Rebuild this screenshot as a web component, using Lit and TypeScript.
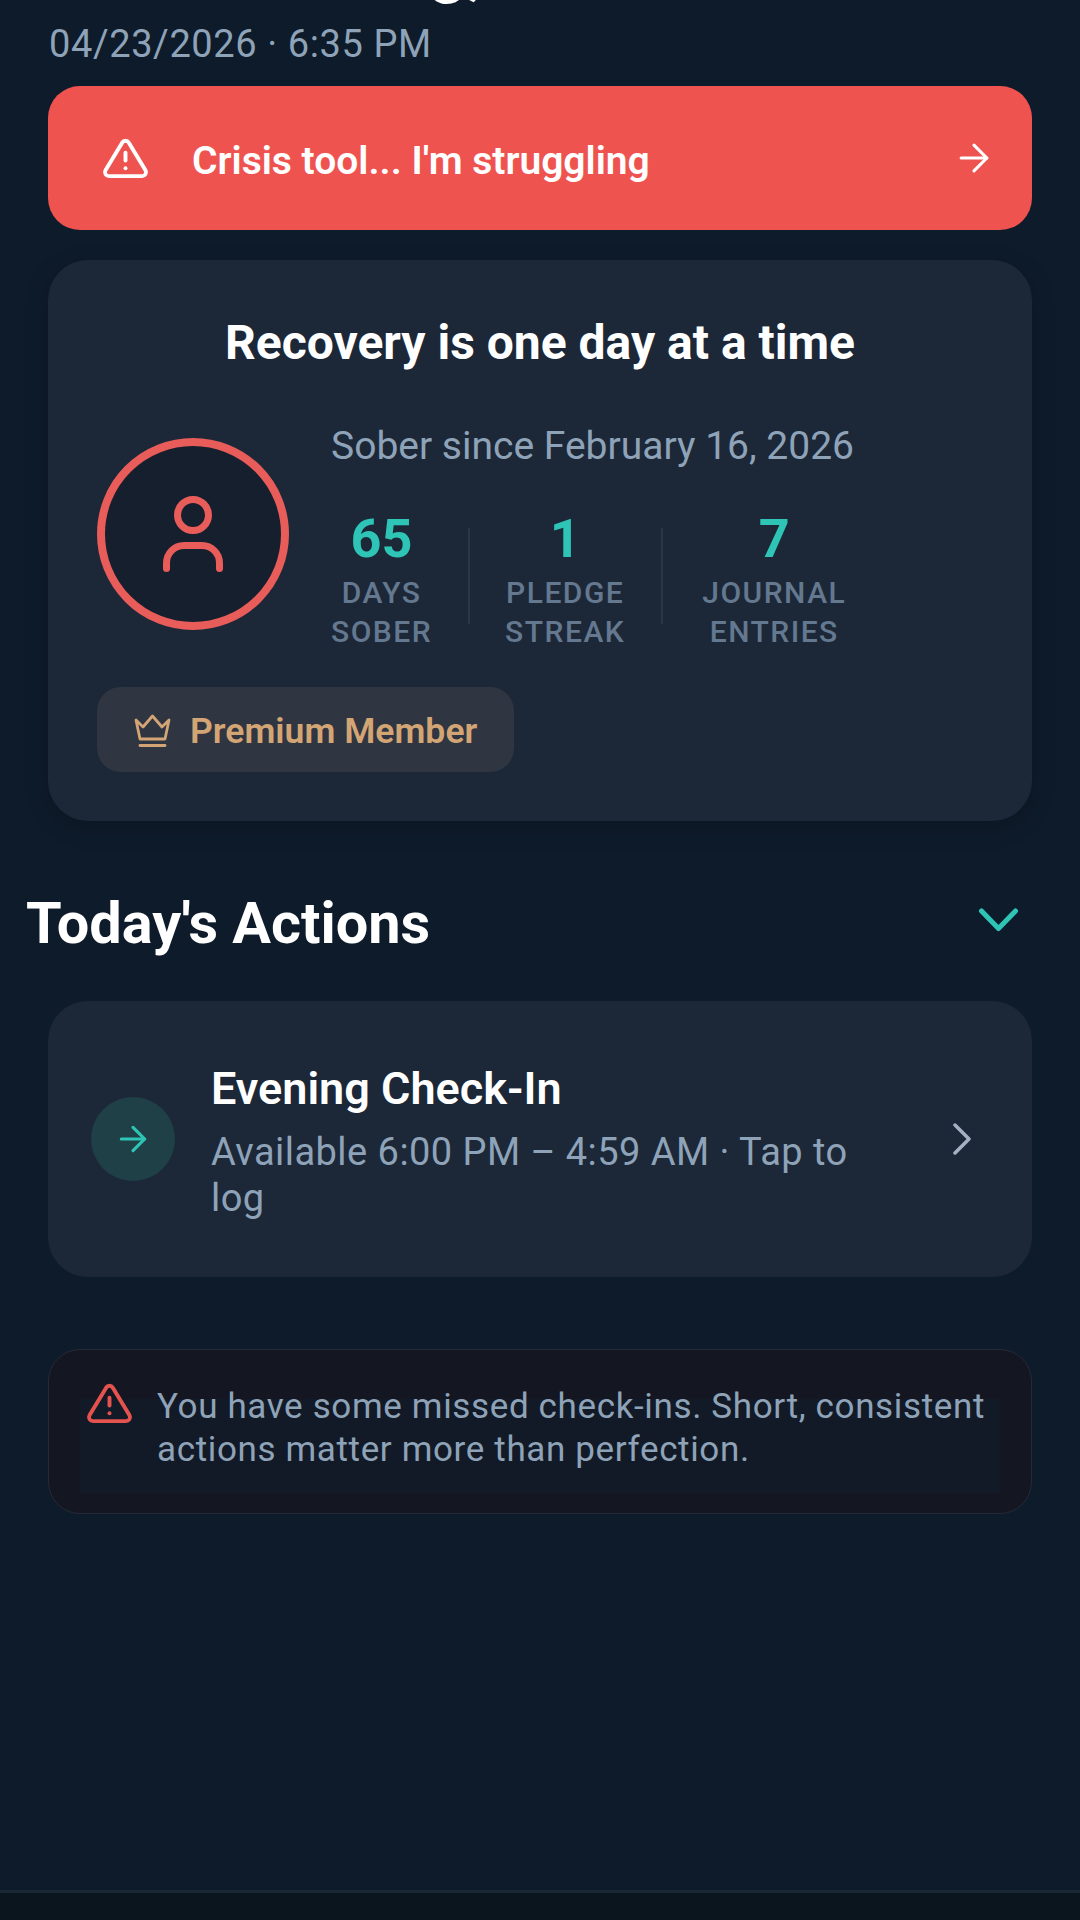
import { LitElement, html, css, svg } from "lit";
import { customElement } from "lit/decorators.js";

const icon = (size: number, sw: number, body: unknown) => html`<svg
  width=${size} height=${size} viewBox="0 0 24 24" fill="none" stroke="currentColor"
  stroke-width=${sw} stroke-linecap="round" stroke-linejoin="round">${body}</svg>`;

const warn = svg`<path d="M10.3 3.9 1.8 18a2 2 0 0 0 1.7 3h17a2 2 0 0 0 1.7-3L13.7 3.9a2 2 0 0 0-3.4 0z"/><path d="M12 9v4"/><path d="M12 17h.01"/>`;
const arrow = svg`<path d="M5 12h14"/><path d="m12 5 7 7-7 7"/>`;

@customElement("app-root")
export class AppRoot extends LitElement {
  static styles = css`
    :host {
      display: block;
      width: 1080px;
      height: 1920px;
      overflow: hidden;
      position: relative;
      background: #0e1b2a;
      font-family: Roboto, "Liberation Sans", sans-serif;
      color: #fff;
    }
    .page { display: flex; flex-direction: column; height: 1890px; }
    .greet {
      margin: -67px 0 0 49px;
      height: 68px;
      line-height: 68px;
      font-size: 68px;
      font-weight: 700;
      white-space: nowrap;
      flex: none;
    }
    .date {
      margin: 20px 0 19px 49px;
      font-size: 38px;
      line-height: 46px;
      height: 46px;
      color: #8fa3b8;
      letter-spacing: 0.6px;
      flex: none;
    }
    .crisis {
      margin: 0 48px;
      height: 144px;
      flex: none;
      border-radius: 32px;
      background: #ef5350;
      display: flex;
      align-items: center;
      padding: 0 36px 0 54px;
      font-size: 39px;
      font-weight: 600;
    }
    .crisis .lbl { flex: 1; margin: 6px 0 0 43px; }
    .crisis svg { flex: none; }
    .card {
      margin: 30px 48px 0;
      background: #1c2838;
      border-radius: 40px;
      padding: 55px 49px 49px;
      flex: none;
      box-shadow: 0 6px 24px rgba(0, 0, 0, 0.18);
    }
    .title {
      margin: 0;
      text-align: center;
      font-size: 48px;
      line-height: 56px;
      font-weight: 700;
    }
    .hero { display: flex; align-items: flex-start; margin-top: 53px; }
    .avatar {
      width: 192px;
      height: 192px;
      box-sizing: border-box;
      border: 8px solid #e85c5a;
      border-radius: 50%;
      background: #161f2d;
      display: flex;
      align-items: center;
      justify-content: center;
      color: #e85c5a;
      flex: none;
      margin-top: 14px;
    }
    .side { margin-left: 42px; }
    .since { font-size: 39px; line-height: 44px; color: #8fa3b8; white-space: nowrap; }
    .stats { display: flex; align-items: flex-start; margin-top: 41px; }
    .stat { display: flex; flex-direction: column; align-items: center; text-align: center; }
    .stat:last-child { margin-left: 4px; }
    .num { font-size: 54px; font-weight: 700; line-height: 60px; color: #2ec4b6; }
    .lab {
      font-size: 30px;
      line-height: 39px;
      letter-spacing: 1.5px;
      color: #64788f;
      font-weight: 500;
      margin-top: 4px;
    }
    .sep { width: 2px; height: 96px; background: #2a3746; margin: 19px 35px 0 36px; flex: none; }
    .pill {
      display: inline-flex;
      align-items: center;
      margin-top: 36px;
      height: 85px;
      box-sizing: border-box;
      padding: 2px 37px 0 37px;
      border-radius: 24px;
      background: #2f3641;
      color: #d4a574;
      font-size: 35.6px;
      font-weight: 600;
    }
    .pill span { margin-left: 19px; }
    .sect {
      display: flex;
      align-items: center;
      justify-content: space-between;
      margin: 68px 0 0 26px;
      padding-right: 62px;
      height: 70px;
      flex: none;
    }
    .sect h2 { margin: 0; font-size: 57.6px; font-weight: 700; line-height: 70px; }
    .sect svg { color: #2ec4b6; margin-bottom: 8px; }
    .action {
      margin: 42px 48px 0;
      height: 276px;
      flex: none;
      box-sizing: border-box;
      background: #1c2838;
      border-radius: 40px;
      display: flex;
      align-items: center;
      padding: 0 61px 0 43px;
    }
    .dot {
      width: 84px;
      height: 84px;
      border-radius: 50%;
      background: #1f4047;
      color: #2ec4b6;
      display: flex;
      align-items: center;
      justify-content: center;
      flex: none;
    }
    .abody { flex: 1; margin: 6px 0 0 36px; min-width: 0; }
    .atitle { font-size: 45px; line-height: 52px; font-weight: 600; }
    .asub { font-size: 38px; line-height: 46px; color: #8fa3b8; margin-top: 14px; max-width: 680px; letter-spacing: 0.46px; }
    .action > svg { color: #a3b1c2; flex: none; }
    .note {
      margin: 72px 48px 0;
      height: 165px;
      flex: none;
      box-sizing: border-box;
      border: 1.5px solid #262a38;
      border-radius: 32px;
      background: #141722;
      display: flex;
      align-items: flex-start;
      padding: 30px 20px 0 37px;
      position: relative;
    }
    .note::before {
      content: "";
      position: absolute;
      left: 31px;
      right: 31px;
      top: 49px;
      bottom: 20px;
      background: #131a27;
    }
    .note svg { color: #e5534f; flex: none; position: relative; }
    .note p {
      position: relative;
      margin: 5px 0 0 24px;
      font-size: 35px;
      line-height: 43px;
      color: #8fa3b8;
      letter-spacing: 0.64px;
    }
    .nav {
      position: absolute;
      left: 0;
      right: 0;
      bottom: 0;
      height: 27px;
      background: #0b151e;
      border-top: 3px solid #182733;
    }
  `;

  render() {
    return html`
      <div class="page">
        <h1 class="greet">Good evening,</h1>
        <div class="date">04/23/2026 · 6:35 PM</div>
        <div class="crisis">
          ${icon(47, 2, warn)}
          <span class="lbl">Crisis tool... I'm struggling</span>
          ${icon(44, 1.7, arrow)}
        </div>
        <section class="card">
          <h3 class="title">Recovery is one day at a time</h3>
          <div class="hero">
            <div class="avatar">
              <svg width="60" height="76" viewBox="0 0 60 76" fill="none" stroke="currentColor" stroke-width="7" stroke-linecap="round">
                <circle cx="30" cy="19" r="15.5"/>
                <path d="M3.5 72.5V67a17.5 17.5 0 0 1 17.5-17.5h18a17.5 17.5 0 0 1 17.5 17.5v5.5"/>
              </svg>
            </div>
            <div class="side">
              <div class="since">Sober since February 16, 2026</div>
              <div class="stats">
                <div class="stat"><div class="num">65</div><div class="lab">DAYS<br />SOBER</div></div>
                <div class="sep"></div>
                <div class="stat"><div class="num">1</div><div class="lab">PLEDGE<br />STREAK</div></div>
                <div class="sep"></div>
                <div class="stat"><div class="num">7</div><div class="lab">JOURNAL<br />ENTRIES</div></div>
              </div>
            </div>
          </div>
          <div class="pill">
            <svg width="37" height="34" viewBox="0 0 37 34" fill="none" stroke="currentColor" stroke-width="2.8" stroke-linecap="round" stroke-linejoin="round">
              <path d="M2 6l7 7 9.500-11 9.500 11 7-7-4 19H6z"/>
              <path d="M6 31.500h25"/>
            </svg>
            <span>Premium Member</span>
          </div>
        </section>
        <div class="sect">
          <h2>Today's Actions</h2>
          <svg width="39" height="24" viewBox="0 0 39 24" fill="none" stroke="currentColor" stroke-width="5" stroke-linecap="round" stroke-linejoin="round"><path d="M2.500 3 19.500 20.500 36.500 3"/></svg>
        </div>
        <div class="action">
          <div class="dot">${icon(40, 1.9, arrow)}</div>
          <div class="abody">
            <div class="atitle">Evening Check-In</div>
            <div class="asub">Available 6:00 PM – 4:59 AM · Tap to log</div>
          </div>
          <svg width="18" height="32" viewBox="0 0 18 32" fill="none" stroke="currentColor" stroke-width="3.500" stroke-linecap="round" stroke-linejoin="round"><path d="M2 2 16 16 2 30"/></svg>
        </div>
        <div class="note">
          ${icon(47, 2, warn)}
          <p>You have some missed check-ins. Short, consistent actions matter more than perfection.</p>
        </div>
      </div>
      <div class="nav"></div>
    `;
  }
}
